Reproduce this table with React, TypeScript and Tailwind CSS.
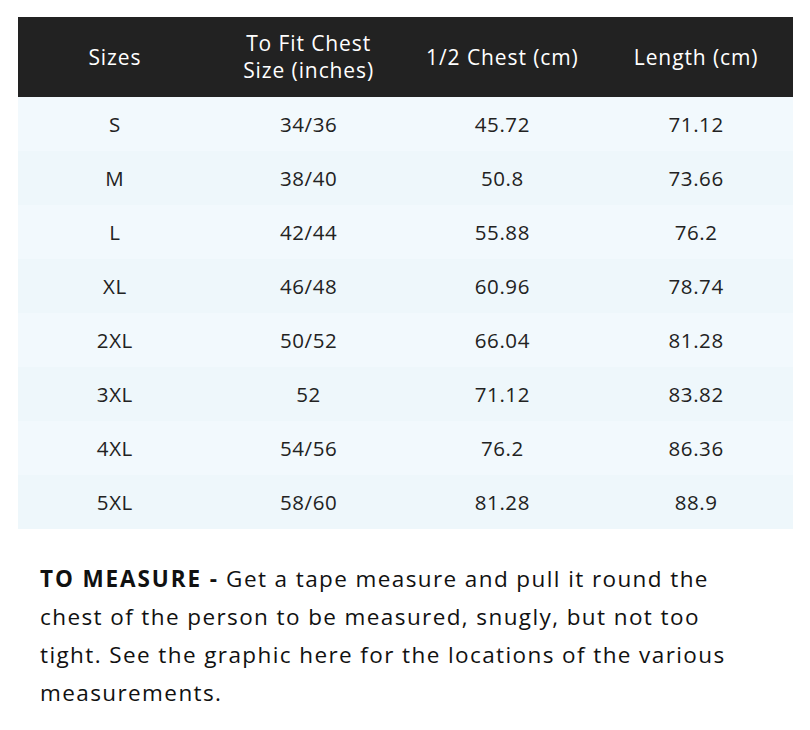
import React from 'react';

const rows = [
  ['S', '34/36', '45.72', '71.12'],
  ['M', '38/40', '50.8', '73.66'],
  ['L', '42/44', '55.88', '76.2'],
  ['XL', '46/48', '60.96', '78.74'],
  ['2XL', '50/52', '66.04', '81.28'],
  ['3XL', '52', '71.12', '83.82'],
  ['4XL', '54/56', '76.2', '86.36'],
  ['5XL', '58/60', '81.28', '88.9'],
];

export default function App() {
  return (
    <div className="w-[810px] h-[730px] bg-white font-['Open_Sans','Lato',sans-serif] text-[#222]">
      <div className="pt-[17px] px-[18px] w-[811px]">
        <div className="grid grid-cols-4 h-[80px] bg-[#222222] text-white text-[21px] leading-[27px] tracking-[0.9px]">
          <div className="flex items-center justify-center text-center">Sizes</div>
          <div className="flex items-center justify-center text-center">
            To Fit Chest
            <br />
            Size (inches)
          </div>
          <div className="flex items-center justify-center text-center">1/2 Chest (cm)</div>
          <div className="flex items-center justify-center text-center">Length (cm)</div>
        </div>
        {rows.map((r, i) => (
          <div
            key={r[0]}
            className={`grid grid-cols-4 h-[54px] text-[20.5px] tracking-[0.6px] ${i % 2 === 0 ? 'bg-[#f2f9fd]' : 'bg-[#eef7fb]'}`}
          >
            {r.map((c, j) => (
              <div key={j} className="flex items-center justify-center">
                {c}
              </div>
            ))}
          </div>
        ))}
      </div>
      <p className="mt-[31px] ml-[40px] text-[22.5px] leading-[38px] tracking-[1.4px] text-[#111] whitespace-nowrap">
        <span className="font-bold tracking-[1.9px]">TO MEASURE -</span> Get a tape measure and pull it round the
        <br />
        chest of the person to be measured, snugly, but not too
        <br />
        tight. See the graphic here for the locations of the various
        <br />
        measurements.
      </p>
    </div>
  );
}
